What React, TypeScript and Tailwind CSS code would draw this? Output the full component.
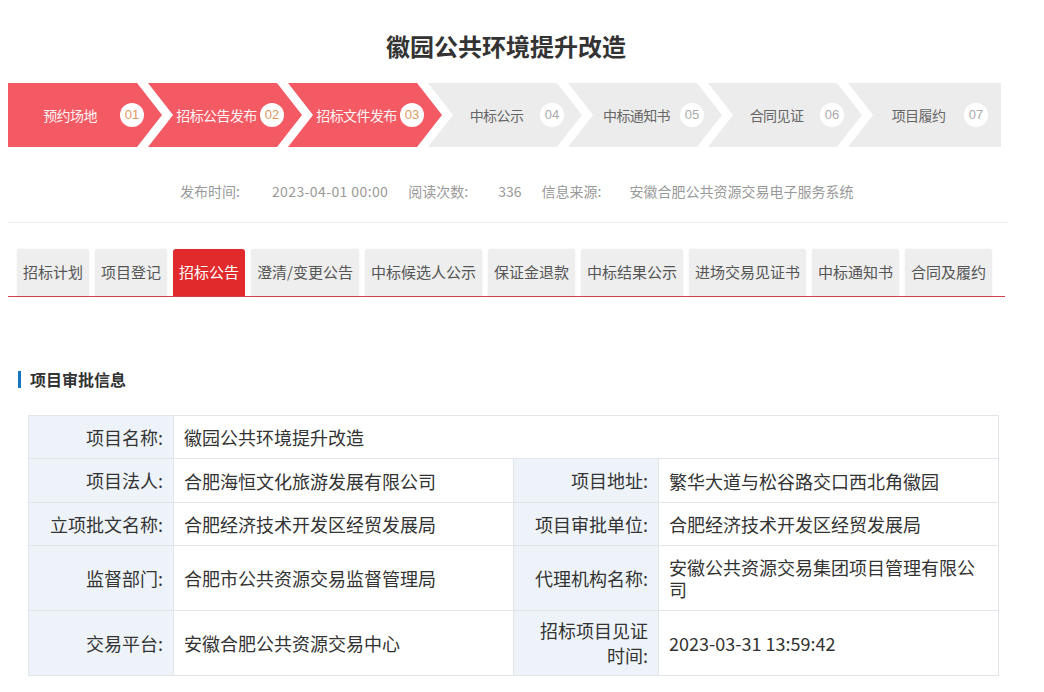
import React from 'react';

const steps = [
  { name: '预约场地', no: '01', done: true },
  { name: '招标公告发布', no: '02', done: true },
  { name: '招标文件发布', no: '03', done: true },
  { name: '中标公示', no: '04', done: false },
  { name: '中标通知书', no: '05', done: false },
  { name: '合同见证', no: '06', done: false },
  { name: '项目履约', no: '07', done: false },
];

const tabs = ['招标计划', '项目登记', '招标公告', '澄清/变更公告', '中标候选人公示', '保证金退款', '中标结果公示', '进场交易见证书', '中标通知书', '合同及履约'];

const font = { fontFamily: '"Noto Sans CJK SC", "Noto Sans", sans-serif' };

function Step({ name, no, done, index }: { name: string; no: string; done: boolean; index: number }) {
  const first = index === 0;
  const last = index === steps.length - 1;
  const clip = first
    ? '[clip-path:polygon(0_0,129px_0,154px_50%,129px_100%,0_100%)]'
    : last
    ? '[clip-path:polygon(0_0,100%_0,100%_100%,0_100%,25px_50%)]'
    : '[clip-path:polygon(0_0,129px_0,154px_50%,129px_100%,0_100%,25px_50%)]';
  return (
    <div
      className={`flex h-[64px] shrink-0 items-center ${last ? 'w-[153px] pr-[13px]' : 'w-[154px] pr-[18px]'} ${
        first ? 'pl-[12px]' : '-ml-[14px] pl-[25px]'
      } ${done ? 'bg-[#f35a64]' : 'bg-[#ececec]'} ${clip}`}
    >
      <span className={`flex-1 text-center text-[14px] tracking-[-0.6px] ${done ? 'text-[#fff4f4]' : 'text-[#666]'}`}>{name}</span>
      <span
        className={`flex h-[24px] w-[24px] items-center justify-center rounded-full bg-white text-[13px] ${
          done ? 'text-[#dc9a63]' : 'text-[#aaa]'
        }`}
        style={{ fontFamily: '"Liberation Sans", sans-serif' }}
      >
        {no}
      </span>
    </div>
  );
}

function Label({ children }: { children: React.ReactNode }) {
  return <td className="border border-[#e2e6eb] bg-[#eef3fa] px-[10px] text-right align-middle leading-[25px]">{children}</td>;
}

function Value({ children, span }: { children: React.ReactNode; span?: number }) {
  return (
    <td colSpan={span} className="border border-[#e2e6eb] px-[10px] align-middle leading-[22px]">
      {children}
    </td>
  );
}

export default function App() {
  return (
    <div className="h-[692px] w-[1044px] overflow-hidden bg-white" style={font}>
      <div className="ml-[8px] w-[996px]">
        <h1 className="pt-[30px] text-center text-[24px] font-bold leading-[32px] text-[#333]">徽园公共环境提升改造</h1>

        <div className="mt-[21px] flex">
          {steps.map((s, i) => (
            <Step key={s.no} {...s} index={i} />
          ))}
        </div>

        <div className="mt-[34px] flex h-[20px] items-center pl-[172px] text-[14px] leading-[20px] text-[#999]">
          <span>发布时间:</span>
          <span className="ml-[32px] tracking-[0.4px]">2023-04-01 00:00</span>
          <span className="ml-[20px]">阅读次数:</span>
          <span className="ml-[30px]">336</span>
          <span className="ml-[20px]">信息来源:</span>
          <span className="ml-[28px]">安徽合肥公共资源交易电子服务系统</span>
        </div>

        <div className="mt-[21px] h-px w-[1000px] bg-[#ebebeb]" />

        <div className="mt-[26px] flex w-[997px] gap-[6px] border-b border-[#d0424c] pl-[9px]">
          {tabs.map((t) => (
            <div
              key={t}
              className={`flex h-[47px] items-center rounded-t-[3px] px-[6px] text-[15px] shadow-[0_0_2px_rgba(0,0,0,0.08)] ${
                t === '招标公告' ? 'bg-[#e12a2c] text-white' : 'bg-[#eeeeee] text-[#555]'
              }`}
            >
              {t}
            </div>
          ))}
        </div>

        <div className="ml-[10px] mt-[70px] flex h-[24px] items-center">
          <span className="h-[17px] w-[3px] bg-[#1677c0]" />
          <span className="ml-[9px] text-[16px] font-bold text-[#333]">项目审批信息</span>
        </div>

        <table className="ml-[20px] mt-[24px] w-[970px] table-fixed border-collapse text-[18px] text-[#333]">
          <colgroup>
            <col className="w-[145px]" />
            <col className="w-[340px]" />
            <col className="w-[145px]" />
            <col className="w-[340px]" />
          </colgroup>
          <tbody>
            <tr className="h-[43px]">
              <Label>项目名称:</Label>
              <Value span={3}>徽园公共环境提升改造</Value>
            </tr>
            <tr className="h-[44px]">
              <Label>项目法人:</Label>
              <Value>合肥海恒文化旅游发展有限公司</Value>
              <Label>项目地址:</Label>
              <Value>繁华大道与松谷路交口西北角徽园</Value>
            </tr>
            <tr className="h-[43px]">
              <Label>立项批文名称:</Label>
              <Value>合肥经济技术开发区经贸发展局</Value>
              <Label>项目审批单位:</Label>
              <Value>合肥经济技术开发区经贸发展局</Value>
            </tr>
            <tr className="h-[65px]">
              <Label>监督部门:</Label>
              <Value>合肥市公共资源交易监督管理局</Value>
              <Label>代理机构名称:</Label>
              <Value>安徽公共资源交易集团项目管理有限公司</Value>
            </tr>
            <tr className="h-[65px]">
              <Label>交易平台:</Label>
              <Value>安徽合肥公共资源交易中心</Value>
              <Label>招标项目见证时间:</Label>
              <Value>2023-03-31 13:59:42</Value>
            </tr>
          </tbody>
        </table>
      </div>
    </div>
  );
}
